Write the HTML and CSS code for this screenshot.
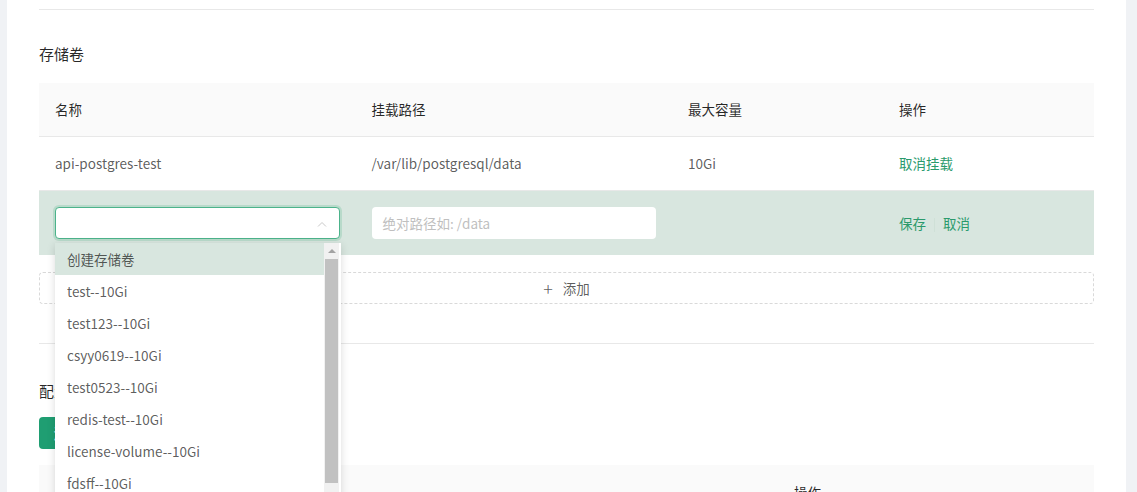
FILE: index.html
```html
<!DOCTYPE html>
<html lang="zh-CN">
<head>
<meta charset="utf-8">
<title>存储卷</title>
<link rel="stylesheet" href="styles.css">
</head>
<body>
<div class="card">
  <div class="divider top"></div>
  <h3 class="section-title">存储卷</h3>
  <table class="tbl">
    <colgroup><col class="c30"><col class="c30"><col class="c20"><col class="c20"></colgroup>
    <thead>
      <tr><th>名称</th><th>挂载路径</th><th>最大容量</th><th>操作</th></tr>
    </thead>
    <tbody>
      <tr class="row">
        <td>api-postgres-test</td>
        <td>/var/lib/postgresql/data</td>
        <td>10Gi</td>
        <td><a class="link">取消挂载</a></td>
      </tr>
      <tr class="row edit">
        <td>
          <div class="select-wrap">
            <div class="select">
              <svg class="arrow" width="10" height="6" viewBox="0 0 10 6"><path d="M1 5.5L5 1.5L9 5.5" fill="none" stroke="#c8c8c8" stroke-width="1"/></svg>
            </div>
            <div class="dropdown">
              <ul class="options">
                <li class="active">创建存储卷</li>
                <li>test--10Gi</li>
                <li>test123--10Gi</li>
                <li>csyy0619--10Gi</li>
                <li>test0523--10Gi</li>
                <li>redis-test--10Gi</li>
                <li>license-volume--10Gi</li>
                <li>fdsff--10Gi</li>
              </ul>
              <div class="scrollbar">
                <div class="sb-btn"><span class="tri up"></span></div>
                <div class="sb-track"><div class="sb-thumb"></div></div>
                <div class="sb-btn"><span class="tri down"></span></div>
              </div>
            </div>
          </div>
        </td>
        <td><div class="input">绝对路径如: /data</div></td>
        <td></td>
        <td><a class="link">保存</a><span class="vsep"></span><a class="link">取消</a></td>
      </tr>
    </tbody>
  </table>
  <div class="add-btn"><span class="plus">+</span>添加</div>
  <div class="divider mid"></div>
  <h3 class="section-title second">配置文件</h3>
  <div class="primary-btn">添加配置文件</div>
  <div class="tbl2-head">
    <span class="h-name">名称</span>
    <span class="h-op">操作</span>
  </div>
</div>
</body>
</html>
```

FILE: styles.css
```css
* { box-sizing: border-box; }
html, body { margin: 0; padding: 0; }
body {
  background: #f0f2f5;
  font-family: "Noto Sans CJK SC", "Noto Sans", sans-serif;
  font-size: 14px;
  color: rgba(0,0,0,0.65);
  height: 492px;
  overflow: hidden;
}
.card {
  margin-left: 7px;
  width: 1119px;
  height: 492px;
  overflow: hidden;
  background: #fff;
  padding: 0 32px;
}
.divider { border-top: 1px solid #e8e8e8; }
.divider.top { position: relative; top: 9px; height: 0; }
.section-title {
  margin: 0;
  padding-top: 42px;
  height: 82px;
  font-size: 15px;
  font-weight: normal;
  line-height: 22px;
  color: rgba(0,0,0,0.85);
}
.tbl {
  width: 1055px;
  border-collapse: collapse;
  table-layout: fixed;
}
.c30 { width: 30%; }
.c20 { width: 20%; }
.tbl th {
  background: #fafafa;
  font-weight: normal;
  text-align: left;
  color: rgba(0,0,0,0.85);
  height: 53px;
  padding: 0 16px;
  border-bottom: 1px solid #e8e8e8;
  font-size: 13.5px;
}
.tbl td {
  height: 54px;
  padding: 0 16px;
  border-bottom: 1px solid #e8e8e8;
  font-size: 13.5px;
}
.row.edit td {
  background: #d8e6df;
  height: 65px;
  border-bottom: none;
}
.link { color: #2b9a6c; cursor: pointer; }
.vsep {
  display: inline-block;
  width: 1px;
  height: 14px;
  background: #cfe0d7;
  margin: 0 8px;
  vertical-align: middle;
}
.select-wrap { position: relative; }
.select {
  height: 32px;
  width: 285px;
  background: #fff;
  border: 1px solid #4cb38b;
  border-radius: 4px;
  box-shadow: 0 0 0 2px rgba(60,170,120,0.2);
  position: relative;
}
.arrow { position: absolute; right: 12px; top: 13px; }
.input {
  width: 284px;
  height: 32px;
  background: #fff;
  border-radius: 4px;
  padding: 0 11px;
  line-height: 32px;
  color: #bfbfbf;
}
.dropdown {
  position: absolute;
  left: 0;
  top: 36px;
  width: 286px;
  height: 260px;
  background: #fff;
  box-shadow: 0 2px 8px rgba(0,0,0,0.15);
  display: flex;
  z-index: 10;
  overflow: hidden;
}
.options {
  list-style: none;
  margin: 0;
  padding: 0;
  flex: 1;
}
.options li {
  height: 32px;
  line-height: 32px;
  padding-left: 12px;
  color: rgba(0,0,0,0.65);
  font-size: 13.5px;
}
.options li.active { background: #d8e6df; }
.scrollbar {
  width: 15px;
  margin-right: 2px;
  background: #f1f1f1;
  display: flex;
  flex-direction: column;
}
.sb-btn {
  height: 16px;
  display: flex;
  align-items: center;
  justify-content: center;
}
.sb-track { flex: 1; padding: 0 1px; display: flex; }
.sb-thumb { background: #c1c1c1; flex: 1; margin-bottom: 4px; }
.tri { width: 0; height: 0; border-left: 4px solid transparent; border-right: 4px solid transparent; }
.tri.up { border-bottom: 4px solid #a3a3a3; }
.tri.down { border-top: 4px solid #505050; }
.add-btn {
  margin-top: 17px;
  height: 32px;
  border: 1px dashed #d9d9d9;
  border-radius: 4px;
  text-align: center;
  line-height: 30px;
  color: rgba(0,0,0,0.65);
  font-size: 13.5px;
}
.plus { font-size: 18px; margin-right: 10px; vertical-align: top; font-weight: 300; }
.divider.mid { margin-top: 39px; }
.section-title.second { padding-top: 36px; height: 73px; }
.primary-btn {
  width: 110px;
  height: 32px;
  background: #1f9e72;
  color: #fff;
  border-radius: 4px;
  line-height: 32px;
  text-align: center;
  font-size: 13.5px;
}
.tbl2-head {
  margin-top: 16px;
  height: 54px;
  background: #fafafa;
  display: flex;
  align-items: flex-start;
  padding: 16px 16px 0;
  color: rgba(0,0,0,0.85);
  font-size: 13.5px;
  line-height: 22px;
}
.h-name { width: 739px; }
.h-op { padding-top: 0; }
```
